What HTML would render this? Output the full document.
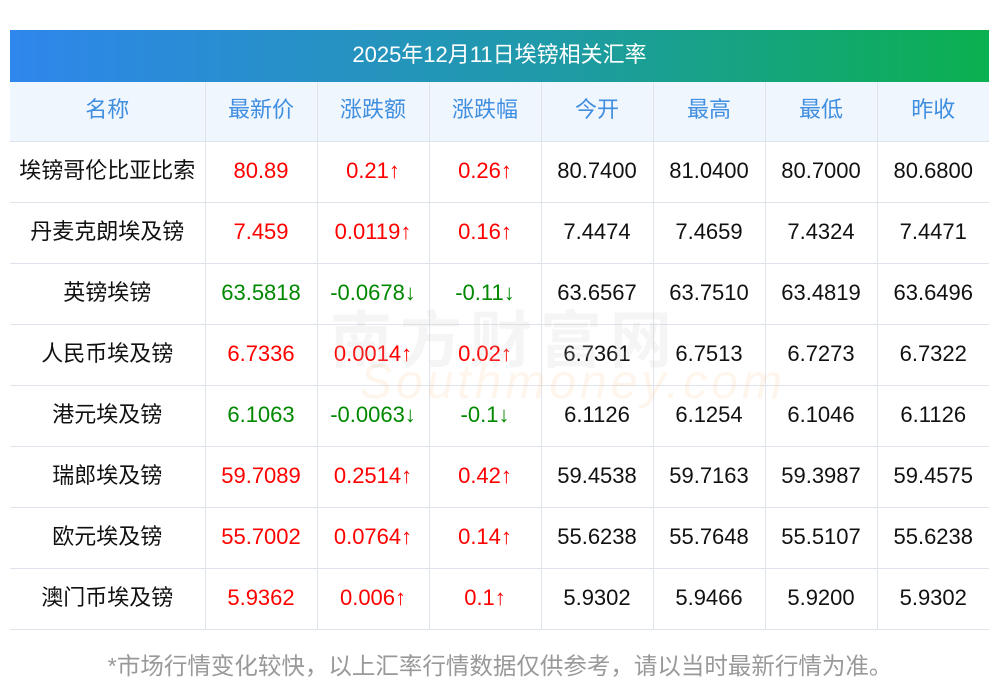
<!DOCTYPE html>
<html><head><meta charset="utf-8"><style>
body{margin:0;background:#fff;width:1000px;height:697px;overflow:hidden;font-family:"Liberation Sans","Noto Sans CJK SC",sans-serif;position:relative}
.title{position:absolute;left:10px;top:30px;width:979px;height:52px;background:linear-gradient(90deg,#2f86ec,#1f9aa8 55%,#0bb04f);color:#fff;font-size:22px;text-align:center;line-height:50px}
table{position:absolute;left:10px;top:82px;border-collapse:collapse;width:979px;table-layout:fixed}
td{height:57px;border-bottom:1px solid #dfe3ec;border-left:1px solid #dfe3ec;text-align:center;font-size:22px;color:#111;padding:0 0 3px 0;line-height:22px}
td:first-child{border-left:none}
tr.h td{background:#f0f6fe;color:#3f8ee0;height:56px}
.r{color:#f00}.g{color:#080}
.foot{position:absolute;top:647px;left:0;width:1000px;text-align:center;color:#999;font-size:23.5px}
.wm{position:absolute;left:330px;top:290px;font-size:62px;color:rgba(200,200,200,.18);letter-spacing:8px;font-weight:bold}
.wm2{position:absolute;left:360px;top:355px;font-size:48px;color:rgba(250,200,150,.18);font-style:italic;letter-spacing:4px}
</style></head><body>
<div class="title">2025年12月11日埃镑相关汇率</div>
<table>
<colgroup><col style="width:195px"><col style="width:112px"><col style="width:112px"><col style="width:112px"><col style="width:112px"><col style="width:112px"><col style="width:112px"><col style="width:112px"></colgroup>
<tr class="h"><td>名称</td><td>最新价</td><td>涨跌额</td><td>涨跌幅</td><td>今开</td><td>最高</td><td>最低</td><td>昨收</td></tr>
<tr><td>埃镑哥伦比亚比索</td><td class="r">80.89</td><td class="r">0.21↑</td><td class="r">0.26↑</td><td>80.7400</td><td>81.0400</td><td>80.7000</td><td>80.6800</td></tr>
<tr><td>丹麦克朗埃及镑</td><td class="r">7.459</td><td class="r">0.0119↑</td><td class="r">0.16↑</td><td>7.4474</td><td>7.4659</td><td>7.4324</td><td>7.4471</td></tr>
<tr><td>英镑埃镑</td><td class="g">63.5818</td><td class="g">-0.0678↓</td><td class="g">-0.11↓</td><td>63.6567</td><td>63.7510</td><td>63.4819</td><td>63.6496</td></tr>
<tr><td>人民币埃及镑</td><td class="r">6.7336</td><td class="r">0.0014↑</td><td class="r">0.02↑</td><td>6.7361</td><td>6.7513</td><td>6.7273</td><td>6.7322</td></tr>
<tr><td>港元埃及镑</td><td class="g">6.1063</td><td class="g">-0.0063↓</td><td class="g">-0.1↓</td><td>6.1126</td><td>6.1254</td><td>6.1046</td><td>6.1126</td></tr>
<tr><td>瑞郎埃及镑</td><td class="r">59.7089</td><td class="r">0.2514↑</td><td class="r">0.42↑</td><td>59.4538</td><td>59.7163</td><td>59.3987</td><td>59.4575</td></tr>
<tr><td>欧元埃及镑</td><td class="r">55.7002</td><td class="r">0.0764↑</td><td class="r">0.14↑</td><td>55.6238</td><td>55.7648</td><td>55.5107</td><td>55.6238</td></tr>
<tr><td>澳门币埃及镑</td><td class="r">5.9362</td><td class="r">0.006↑</td><td class="r">0.1↑</td><td>5.9302</td><td>5.9466</td><td>5.9200</td><td>5.9302</td></tr>
</table>
<div class="wm">南方财富网</div>
<div class="wm2">Southmoney.com</div>
<div class="foot">*市场行情变化较快，以上汇率行情数据仅供参考，请以当时最新行情为准。</div>
</body></html>
